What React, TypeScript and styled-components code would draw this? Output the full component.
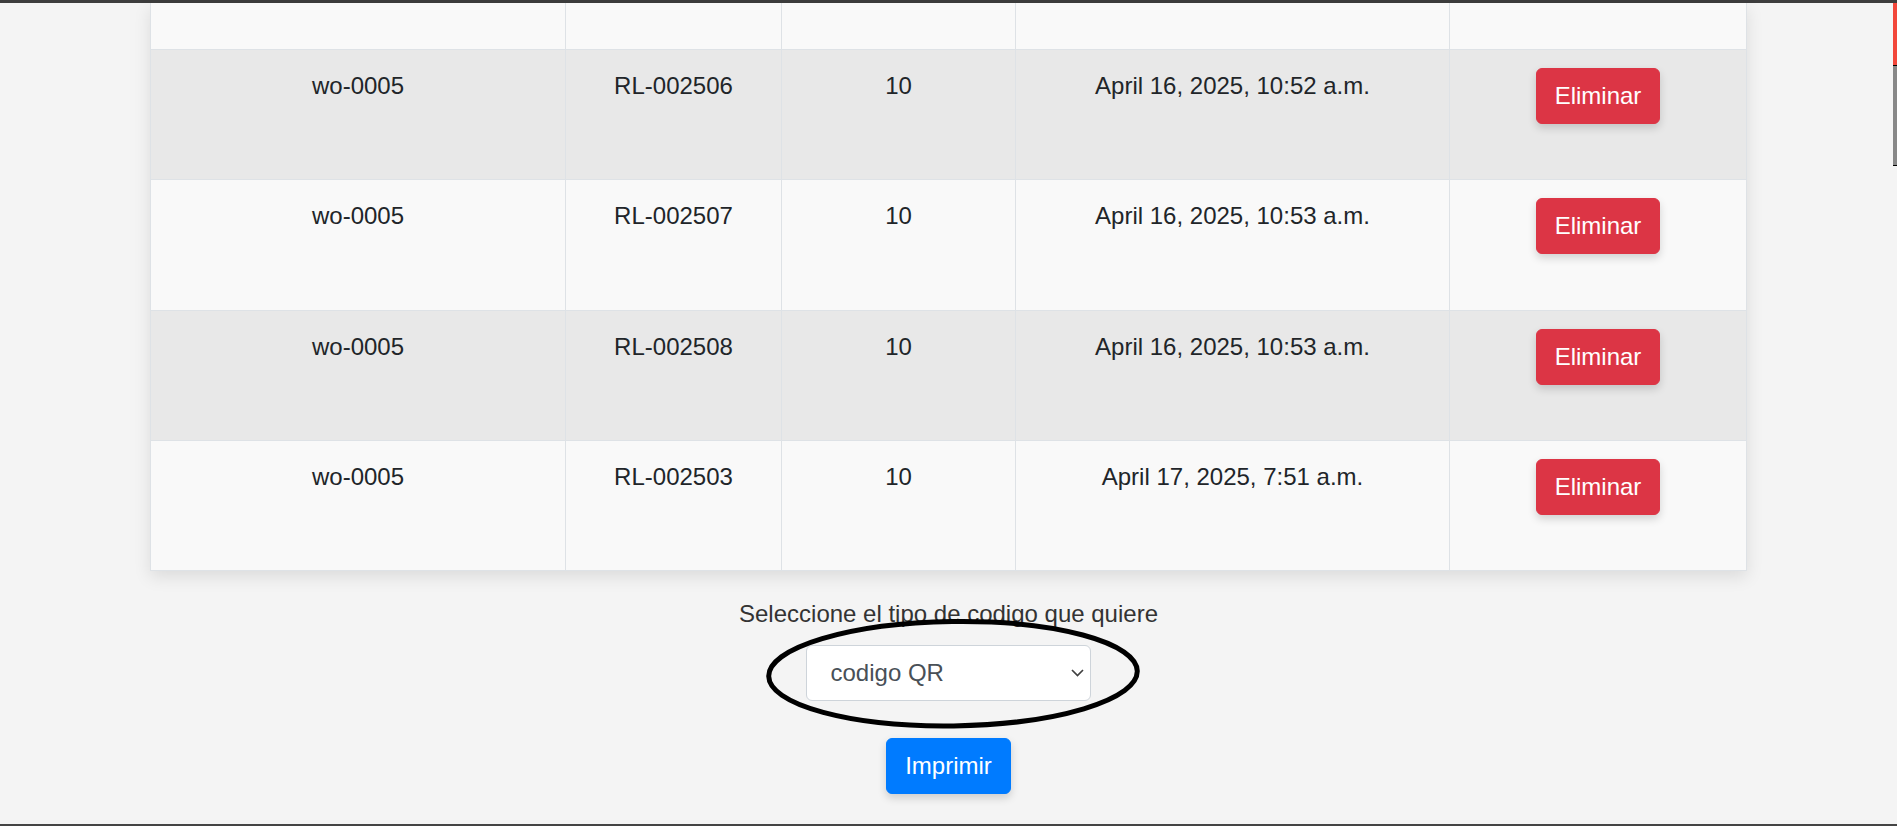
import React from 'react';
import styled, { createGlobalStyle } from 'styled-components';

const GlobalStyle = createGlobalStyle`
  *, *::before, *::after { box-sizing: border-box; }
  html, body { margin: 0; padding: 0; }
  body {
    background: #f4f4f4;
    font-family: "Liberation Sans", Arial, sans-serif;
    font-size: 24px;
    line-height: 1.5;
    color: #212529;
    overflow: hidden;
  }
`;

const Page = styled.div`
  display: flex;
  flex-direction: column;
  min-height: 100vh;
`;

const TopEdge = styled.div`
  height: 3px;
  flex-shrink: 0;
  background: #3d3d3d;
`;

const BottomEdge = styled.div`
  height: 2px;
  flex-shrink: 0;
  background: #444;
`;

const Main = styled.main`
  flex: 1;
  display: flex;
  flex-direction: column;
  align-items: center;
`;

const Table = styled.table`
  width: 1596px;
  table-layout: fixed;
  border-collapse: collapse;
  background: #f9f9f9;
  border: 1px solid #dee2e6;
  border-top: none;
  box-shadow: 0 6px 16px rgba(0, 0, 0, 0.1);
`;

const Row = styled.tr<{ $shade: boolean }>`
  height: 130.4px;
  background: ${(p) => (p.$shade ? '#e8e8e8' : '#f9f9f9')};
`;

const PartialRow = styled.tr`
  height: 46.3px;
  background: #f9f9f9;
`;

const Cell = styled.td`
  padding: 18px;
  text-align: center;
  vertical-align: top;
  border: 1px solid #dee2e6;
  color: #212529;
`;

const EmptyCell = styled.td`
  padding: 0;
  border: 1px solid #dee2e6;
  border-top: none;
`;

const Button = styled.button<{ $variant: 'danger' | 'primary' }>`
  font-family: inherit;
  font-size: 24px;
  line-height: 36px;
  padding: 9px 18px;
  border-radius: 6px;
  color: #fff;
  cursor: pointer;
  border: 1px solid ${(p) => (p.$variant === 'danger' ? '#dc3545' : '#007bff')};
  background: ${(p) => (p.$variant === 'danger' ? '#dc3545' : '#007bff')};
  box-shadow: 0 4px 9px rgba(0, 0, 0, 0.16);
`;

const Controls = styled.section`
  display: flex;
  flex-direction: column;
  align-items: center;
  margin-top: 24.5px;
`;

const Label = styled.label`
  color: #333;
  line-height: 36px;
`;

const SelectWrap = styled.div`
  position: relative;
  margin-top: 13.5px;
`;

const Select = styled.select`
  appearance: none;
  -webkit-appearance: none;
  width: 285px;
  height: 56px;
  padding: 9px 30px 9px 23.5px;
  font-family: inherit;
  font-size: 24px;
  line-height: 36px;
  color: #495057;
  background-color: #fff;
  background-image: url("data:image/svg+xml,%3Csvg xmlns='http://www.w3.org/2000/svg' viewBox='0 0 13 8'%3E%3Cpath d='M1 1l5.5 5.5L12 1' fill='none' stroke='%23404040' stroke-width='1.7'/%3E%3C/svg%3E");
  background-repeat: no-repeat;
  background-position: right 6px center;
  background-size: 13px 8px;
  border: 1px solid #ced4da;
  border-radius: 6px;
`;

const Annotation = styled.svg`
  position: absolute;
  left: -40px;
  top: -26px;
  overflow: visible;
  pointer-events: none;
`;

const PrintButton = styled(Button)`
  margin-top: 36.7px;
`;

const ScrollIndicator = styled.div`
  position: fixed;
  top: 3px;
  right: 0;
  width: 4px;
  display: flex;
  flex-direction: column;
`;

const ScrollTrackTop = styled.div`
  height: 63px;
  background: #f2473a;
  border-bottom: 1.5px solid #000;
`;

const ScrollThumb = styled.div`
  height: 100px;
  background: #888;
  border-bottom: 1.5px solid #000;
`;

const rows = [
  { wo: 'wo-0005', rl: 'RL-002506', qty: 10, date: 'April 16, 2025, 10:52 a.m.' },
  { wo: 'wo-0005', rl: 'RL-002507', qty: 10, date: 'April 16, 2025, 10:53 a.m.' },
  { wo: 'wo-0005', rl: 'RL-002508', qty: 10, date: 'April 16, 2025, 10:53 a.m.' },
  { wo: 'wo-0005', rl: 'RL-002503', qty: 10, date: 'April 17, 2025, 7:51 a.m.' },
];

const colWidths = [415, 216, 234, 434, 297];

export default function App() {
  return (
    <>
      <GlobalStyle />
      <Page>
        <TopEdge />
        <Main>
          <Table>
            <colgroup>
              {colWidths.map((w, i) => (
                <col key={i} style={{ width: w }} />
              ))}
            </colgroup>
            <tbody>
              <PartialRow>
                {colWidths.map((_, i) => (
                  <EmptyCell key={i} />
                ))}
              </PartialRow>
              {rows.map((r, i) => (
                <Row key={r.rl} $shade={i % 2 === 0}>
                  <Cell>{r.wo}</Cell>
                  <Cell>{r.rl}</Cell>
                  <Cell>{r.qty}</Cell>
                  <Cell>{r.date}</Cell>
                  <Cell>
                    <Button $variant="danger">Eliminar</Button>
                  </Cell>
                </Row>
              ))}
            </tbody>
          </Table>
          <Controls>
            <Label htmlFor="tipo">Seleccione el tipo de codigo que quiere</Label>
            <SelectWrap>
              <Select id="tipo" defaultValue="qr">
                <option value="qr">codigo QR</option>
                <option value="barras">codigo de barras</option>
              </Select>
              <Annotation width="375" height="110" viewBox="0 0 375 110">
                <ellipse
                  cx="187"
                  cy="54.7"
                  rx="184.3"
                  ry="52.2"
                  fill="none"
                  stroke="#000"
                  strokeWidth="5"
                  transform="rotate(-0.8 187 54.7)"
                />
              </Annotation>
            </SelectWrap>
            <PrintButton $variant="primary">Imprimir</PrintButton>
          </Controls>
        </Main>
        <BottomEdge />
      </Page>
      <ScrollIndicator>
        <ScrollTrackTop />
        <ScrollThumb />
      </ScrollIndicator>
    </>
  );
}
